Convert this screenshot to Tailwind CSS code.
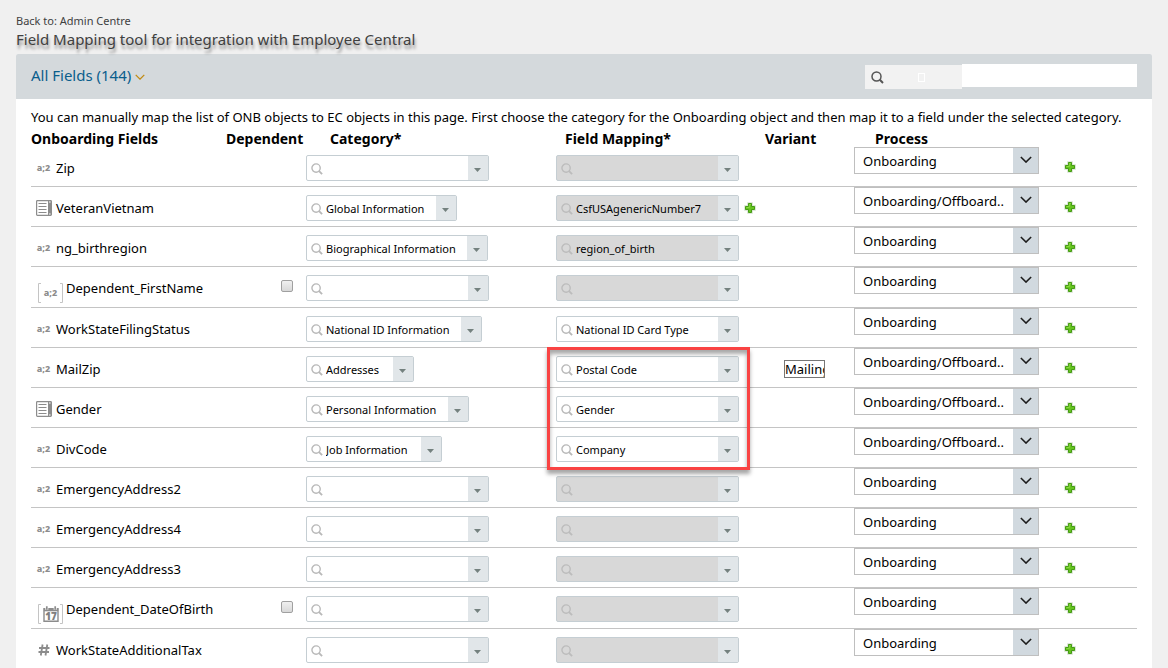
<!DOCTYPE html>
<html lang="en">
<head>
<meta charset="utf-8">
<meta name="viewport" content="width=device-width, initial-scale=1">
<title>Field Mapping tool for integration with Employee Central</title>
<script src="https://cdn.jsdelivr.net/npm/@tailwindcss/browser@4"></script>
</head>
<body class="bg-[#f0f0f0] font-['Noto_Sans',sans-serif] text-[13px] text-black">

<svg class="hidden" aria-hidden="true">
  <defs>
    <symbol id="icon-search" viewBox="0 0 13 13">
      <circle cx="5.5" cy="5.5" r="4.5" fill="none" stroke="currentColor" stroke-width="1.5"/>
      <path d="M8.8 8.8 12 12" fill="none" stroke="currentColor" stroke-width="2"/>
    </symbol>
    <symbol id="icon-plus" viewBox="0 0 12 12">
      <path d="M4 1h4v3h3v4h-3v3h-4v-3h-3v-4h3z" fill="#62c01c" stroke="#d5e2cf" stroke-width="1.6"/>
      <path d="M4.5 1.5h3v3h3v3h-3v3h-3v-3h-3v-3h3z" fill="#66c41f" stroke="#459a14" stroke-width="1"/>
      <path d="M5.4 2.5h1.4M2.4 5.5h2.9v-3" fill="none" stroke="#93e04a" stroke-width=".8"/>
    </symbol>
    <symbol id="icon-list" viewBox="0 0 16 16">
      <rect x=".6" y=".6" width="14.8" height="14.8" rx=".8" fill="#fff" stroke="#8c8c8c" stroke-width="1.2"/>
      <rect x="12" y="1" width="3.5" height="14" fill="#8c8c8c"/>
      <path d="M2.5 3.5h8M2.5 6.5h8M2.5 9.5h8M2.5 12.5h8" stroke="#8c8c8c"/>
      <path d="M13 2h1.6M13 14h1.6" stroke="#fff" stroke-width="1.2"/>
    </symbol>
    <symbol id="icon-hash" viewBox="0 0 12 12">
      <path d="M4.6.5 2.8 11.5M9.3.5 7.5 11.5M1 4h10.5M.5 8h10.5" fill="none" stroke="#8c8c8c" stroke-width="1.8"/>
    </symbol>
    <symbol id="icon-calendar" viewBox="0 0 16 16">
      <path d="M1 2.7h14v12.6H1z" fill="#fff" stroke="#8c8c8c" stroke-width="1.4"/>
      <path d="M.8 2.5h14.4v2.8H.8z" fill="#8c8c8c"/>
      <path d="M3.8.3v3.4M12.2.3v3.4" stroke="#fff" stroke-width="3"/>
      <path d="M3.8.3v3.4M12.2.3v3.4" stroke="#8c8c8c" stroke-width="1.7"/>
      <text x="8" y="13.6" text-anchor="middle" font-size="10" font-weight="900" fill="#808080">17</text>
    </symbol>
    <symbol id="icon-chevron" viewBox="0 0 14 8">
      <path d="M1 1l6 6 6-6" fill="none" stroke="currentColor" stroke-width="1.8"/>
    </symbol>
    <symbol id="icon-brackets" viewBox="0 0 25 20">
      <path d="M3 .5H.5v19H3M22 .5h2.5v19H22" fill="none" stroke="#c4c4c4"/>
    </symbol>
  </defs>
</svg>

<main class="px-4 pt-3">
  <header class="text-[#404040]">
    <p class="h-[18px] text-[11px] leading-[18px]">Back to: <a href="#">Admin Centre</a></p>
    <h1 class="h-6 text-[15px] leading-[18px] text-shadow-[1px_4px_3px_rgb(0_0_0/0.4)]">Field Mapping tool for integration with Employee Central</h1>
  </header>

  <section class="rounded-t-xs bg-white">
    <div class="flex h-[45px] items-start justify-between rounded-t-xs bg-[#d4d9dc] px-[15px] pt-2.5">
      <button type="button" class="flex items-center gap-1 text-[15px] leading-[22px] text-[#0a5e8c]">
        All Fields (144)
        <svg class="mt-1 h-1.5 w-2.5 text-[#c08a12]" aria-hidden="true"><use href="#icon-chevron"/></svg>
      </button>
      <form class="flex items-start" role="search">
        <div class="mt-px flex h-6 w-[97px] items-center bg-[#f2f2f2] pl-[6px]">
          <svg class="size-[13px] text-[#555]" aria-hidden="true"><use href="#icon-search"/></svg>
          <span class="ml-[34px] h-[9px] w-[7px] border border-white"></span>
        </div>
        <input type="search" aria-label="Search fields" class="h-[23px] w-[175px] appearance-none bg-white px-2 outline-none">
      </form>
    </div>

    <div class="px-[15px] pt-2">
      <p class="h-5 text-[13px] leading-5 whitespace-nowrap">You can manually map the list of ONB objects to EC objects in this page. First choose the category for the Onboarding object and then map it to a field under the selected category.</p>
      <table class="w-full table-fixed border-separate border-spacing-0 text-left">
        <colgroup>
          <col class="w-[195px]"><col class="w-20"><col class="w-[250px]"><col class="w-[209px]"><col class="w-[89px]"><col class="w-[210px]"><col>
        </colgroup>
        <thead>
          <tr class="text-[14px] leading-[17px]">
            <th class="pt-[3px] pb-0">Onboarding Fields</th>
            <th class="pt-[3px] pb-0">Dependent</th>
            <th class="pt-[3px] pb-0 pl-6">Category*</th>
            <th class="pt-[3px] pb-0 pl-[9px]">Field Mapping*</th>
            <th class="pt-[3px] pb-0">Variant</th>
            <th class="pt-[3px] pb-0 pl-[21px]">Process</th>
            <th class="p-0" aria-label="Add"></th>
          </tr>
        </thead>
        <tbody id="rows"></tbody>
      </table>
    </div>
  </section>
</main>

<script>
const rows = [
  { name: 'Zip' },
  { name: 'VeteranVietnam', type: 'list', category: 'Global Information', size: 'w-[151px]', mapping: 'CsfUSAgenericNumber7', locked: true, extra: true, both: true },
  { name: 'ng_birthregion', category: 'Biographical Information', size: 'w-[182px]', mapping: 'region_of_birth', locked: true },
  { name: 'Dependent_FirstName', dependent: true },
  { name: 'WorkStateFilingStatus', category: 'National ID Information', size: 'w-[176px]', mapping: 'National ID Card Type' },
  { name: 'MailZip', category: 'Addresses', size: 'w-[108px]', mapping: 'Postal Code', variant: 'Mailing', both: true, highlight: true },
  { name: 'Gender', type: 'list', category: 'Personal Information', size: 'w-[163px]', mapping: 'Gender', both: true },
  { name: 'DivCode', category: 'Job Information', size: 'w-[136px]', mapping: 'Company', both: true },
  { name: 'EmergencyAddress2' },
  { name: 'EmergencyAddress4' },
  { name: 'EmergencyAddress3' },
  { name: 'Dependent_DateOfBirth', type: 'date', dependent: true },
  { name: 'WorkStateAdditionalTax', type: 'number' }
];

const typeIcons = {
  list: '<svg class="size-4" aria-hidden="true"><use href="#icon-list"/></svg>',
  number: '<svg class="size-3" aria-hidden="true"><use href="#icon-hash"/></svg>',
  date: '<svg class="size-4" aria-hidden="true"><use href="#icon-calendar"/></svg>',
  text: '<span class="text-[9px] leading-3 font-extrabold text-[#8c8c8c]">a;2</span>'
};

const combo = (label, value, size, locked) => `
  <div class="flex h-[26px] ${size} rounded-xs border border-[#c5ced3] ${locked ? 'bg-[#d8d8d8]' : 'bg-white'}">
    <div class="flex min-w-0 flex-1 items-center gap-[3px] pl-1">
      <svg class="mt-0.5 size-3 shrink-0 ${locked ? 'text-[#bcbcbc]' : 'text-[#b8b8b8]'}" aria-hidden="true"><use href="#icon-search"/></svg>
      <input type="text" aria-label="${label}" value="${value || ''}" class="mt-0.5 w-full min-w-0 text-[11px] outline-none">
    </div>
    <button type="button" aria-label="Open ${label}" class="flex w-5 shrink-0 items-center justify-center bg-[#e1e6e9] pt-1 pr-0.5">
      <svg class="h-1 w-[7px]" viewBox="0 0 7 4" aria-hidden="true"><path d="M0 0h7L3.5 4z" fill="#74817f"/></svg>
    </button>
  </div>`;

const plus = (label) => `<button type="button" aria-label="${label}" class="block size-3"><svg class="size-3" aria-hidden="true"><use href="#icon-plus"/></svg></button>`;

document.getElementById('rows').innerHTML = rows.map((r, i) => {
  const last = i === rows.length - 1;
  const cell = `${last ? 'h-[39px]' : r.dependent ? 'h-[41px] border-b' : 'h-10 border-b'} border-[#c4c4c4] p-0 align-top`;
  const icon = typeIcons[r.type || 'text'];
  const name = r.dependent
    ? `<div class="flex items-start gap-[3px] pt-[11px] pl-[7px]">
         <span class="mt-[5px] grid h-5 w-[25px] place-items-center">
           <svg class="col-start-1 row-start-1 h-5 w-[25px]" aria-hidden="true"><use href="#icon-brackets"/></svg>
           <span class="col-start-1 row-start-1 flex">${icon}</span>
         </span>
         <span class="leading-5">${r.name}</span>
       </div>`
    : `<div class="flex items-center pt-[11px]">
         <span class="flex w-[25px] justify-center">${icon}</span>
         <span class="leading-5">${r.name}</span>
       </div>`;
  return `<tr>
    <td class="${cell}">${name}</td>
    <td class="${cell}">${r.dependent ? `<input type="checkbox" aria-label="${r.name} is dependent" class="mt-[13px] ml-[55px] block size-3 appearance-none rounded-xs border border-[#a0a0a0] bg-linear-to-b from-[#f0f0f0] to-[#d8d8d8]">` : ''}</td>
    <td class="${cell}"><div class="pt-2">${combo(r.name + ' category', r.category, r.size || 'w-[183px]', false)}</div></td>
    <td class="${cell} relative">
      <div class="flex items-center gap-[5px] pt-2">${combo(r.name + ' mapping', r.mapping, 'w-[183px]', r.locked || !r.mapping)}${r.extra ? plus('Add mapping') : ''}</div>
      ${r.highlight ? '<div class="pointer-events-none absolute -top-px -left-[9px] z-10 h-[123px] w-[203px] border-3 border-[#f94343] shadow-[0_4px_4px_rgb(0_0_0/0.35),inset_0_4px_4px_rgb(0_0_0/0.35)]"></div>' : ''}
    </td>
    <td class="${cell}">${r.variant ? `<input type="text" aria-label="Variant" value="${r.variant}" class="mt-3 ml-[19px] block h-[18px] w-[41px] border border-[#767676] bg-white pt-px text-[13px] outline-none">` : ''}</td>
    <td class="${cell}">
      <div class="relative h-[27px] w-[185px]">
        <select aria-label="${r.name} process" class="size-full appearance-none border border-[#bfbfbf] bg-white pt-0.5 pr-7 pl-2 text-[13px] outline-none">
          <option${r.both ? '' : ' selected'}>Onboarding</option>
          <option${r.both ? ' selected' : ''}>Onboarding/Offboard..</option>
        </select>
        <span class="pointer-events-none absolute inset-y-px right-px flex w-[25px] items-center justify-center bg-[#d1d9df] pb-0.5 text-[#1c1c1c]">
          <svg class="h-[7px] w-3" aria-hidden="true"><use href="#icon-chevron"/></svg>
        </span>
      </div>
    </td>
    <td class="${cell}"><div class="pt-3.5">${plus('Add process')}</div></td>
  </tr>`;
}).join('');
</script>
</body>
</html>
